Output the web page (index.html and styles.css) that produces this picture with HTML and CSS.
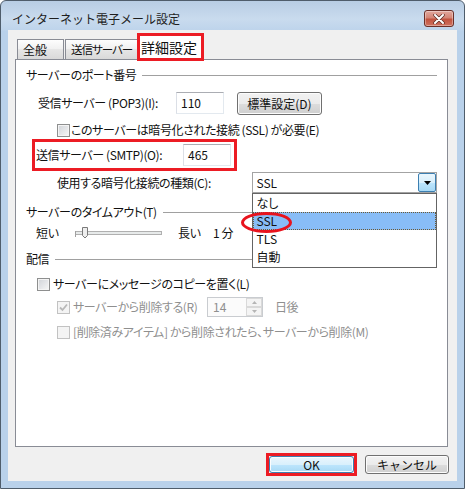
FILE: index.html
```html
<!DOCTYPE html>
<html lang="ja">
<head>
    <meta charset="UTF-8">
    <title>インターネット電子メール設定</title>
    <link rel="stylesheet" href="styles.css">
</head>
<body>
    <div class="window">
        <!-- Title bar -->
        <div class="titlebar">
            <span class="title">インターネット電子メール設定</span>
            <button class="close-btn">
                <svg width="12" height="10" viewBox="0 0 12 10">
                    <path d="M2 1 L10 9 M10 1 L2 9" stroke="#5b2c25" stroke-width="3.4" stroke-linecap="round"/>
                    <path d="M2 1 L10 9 M10 1 L2 9" stroke="#fff" stroke-width="2" stroke-linecap="round"/>
                </svg>
            </button>
        </div>

        <div class="client">
            <!-- Tabs -->
            <div class="tabs">
                <div class="tab tab-general">全般</div>
                <div class="tab tab-smtp">送信サーバー</div>
                <div class="tab tab-active">詳細設定</div>
            </div>

            <div class="panel">
                <!-- Ports -->
                <div class="group-head head-ports">
                    <span>サーバーのポート番号</span>
                    <span class="rule"></span>
                </div>
                <div class="row row-pop3">
                    <span class="pop3-label">受信サーバー (POP3)(I):</span>
                    <div class="textbox">110</div>
                    <button class="btn default-btn">標準設定(D)</button>
                </div>
                <div class="row row-ssl">
                    <span class="checkbox"></span>
                    <span>このサーバーは暗号化された接続 (SSL) が必要(E)</span>
                </div>
                <div class="row smtp-mark">
                    <span class="smtp-label">送信サーバー (SMTP)(O):</span>
                    <div class="textbox">465</div>
                </div>
                <div class="row row-crypto">
                    <span class="crypto-label">使用する暗号化接続の種類(C):</span>
                    <div class="combo">
                        <span class="combo-value">SSL</span>
                        <span class="combo-arrow">
                            <svg width="7" height="4" viewBox="0 0 7 4"><path d="M0 0 H7 L3.5 4 Z" fill="#000"/></svg>
                        </span>
                        <ul class="combo-list">
                            <li>なし</li>
                            <li class="selected">SSL</li>
                            <li>TLS</li>
                            <li>自動</li>
                        </ul>
                        <span class="circle-mark"></span>
                    </div>
                </div>

                <!-- Timeout -->
                <div class="group-head head-timeout">
                    <span>サーバーのタイムアウト(T)</span>
                    <span class="rule"></span>
                </div>
                <div class="row row-slider">
                    <span class="short">短い</span>
                    <svg class="slider" width="88" height="14" viewBox="0 0 88 14">
                        <rect x="0.5" y="5.5" width="86" height="3" fill="#e7eaea" stroke="#b0b0b0"/>
                        <line x1="0.5" y1="5" x2="0.5" y2="11" stroke="#a0a0a0"/>
                        <path d="M7.5 1.5 H12.5 V9.5 L10 12 L7.5 9.5 Z" fill="#eeeeee" stroke="#7a7a7a"/>
                    </svg>
                    <span class="long">長い</span>
                    <span>1 分</span>
                </div>

                <!-- Delivery -->
                <div class="group-head head-delivery">
                    <span>配信</span>
                    <span class="rule"></span>
                </div>
                <div class="row row-copy">
                    <span class="checkbox"></span>
                    <span>サーバーにメッセージのコピーを置く(L)</span>
                </div>
                <div class="row row-delete disabled">
                    <span class="checkbox checked">
                        <svg width="9" height="9" viewBox="0 0 9 9"><path d="M1 4.5 L3.5 7 L8 1.5" stroke="#b8b8b8" stroke-width="1.8" fill="none"/></svg>
                    </span>
                    <span class="delete-label">サーバーから削除する(R)</span>
                    <div class="spin">
                        <span class="spin-value">14</span>
                        <span class="spin-buttons">
                            <span class="spin-up"><svg width="5" height="3" viewBox="0 0 5 3"><path d="M0 3 H5 L2.5 0 Z" fill="#b5b5b5"/></svg></span>
                            <span class="spin-down"><svg width="5" height="3" viewBox="0 0 5 3"><path d="M0 0 H5 L2.5 3 Z" fill="#b5b5b5"/></svg></span>
                        </span>
                    </div>
                    <span class="days">日後</span>
                </div>
                <div class="row row-deleted disabled">
                    <span class="checkbox"></span>
                    <span>[削除済みアイテム] から削除されたら、サーバーから削除(M)</span>
                </div>
            </div>

            <!-- Dialog buttons -->
            <div class="actions">
                <div class="ok-mark">
                    <button class="btn ok-btn">OK</button>
                </div>
                <button class="btn cancel-btn">キャンセル</button>
            </div>
        </div>
    </div>
</body>
</html>
```

FILE: styles.css
```css
* {
    margin: 0;
    padding: 0;
    box-sizing: border-box;
}

body {
    width: 465px;
    height: 489px;
    overflow: hidden;
    background: #fff;
    font-family: "Noto Sans CJK JP", sans-serif;
    font-size: 12px;
    line-height: 16px;
    color: #111;
    font-feature-settings: "palt";
}

/* Window frame */
.window {
    width: 465px;
    height: 489px;
    border: 1px solid #4f5d6b;
    border-radius: 6px 6px 0 0;
    background: linear-gradient(to bottom, #b8cde4 0, #c9dbee 18px, #bed4eb 29px, #b9d1ea 30px);
    padding: 0 7px 7px;
    display: flex;
    flex-direction: column;
}

.titlebar {
    height: 29px;
    display: flex;
    align-items: flex-start;
    padding-left: 4px;
}

.title {
    margin-top: 10px;
    font-feature-settings: normal;
    color: #1e1e1e;
}

.close-btn {
    margin-left: auto;
    margin-top: 9px;
    margin-right: 3px;
    width: 30px;
    height: 17px;
    border: 1px solid #6b2f28;
    border-radius: 3px;
    background: linear-gradient(to bottom, #e2a89e 0%, #d48576 45%, #c2533f 55%, #cf7260 100%);
    box-shadow: inset 0 0 0 1px rgba(255, 255, 255, 0.35);
    display: flex;
    align-items: center;
    justify-content: center;
}

.client {
    height: 451px;
    background: #f0f0f0;
    padding: 3px 8px 0 7px;
    display: flex;
    flex-direction: column;
}

/* Tabs */
.tabs {
    height: 26px;
    display: flex;
    align-items: flex-end;
    padding-left: 2px;
    position: relative;
    z-index: 1;
}

.tab {
    height: 20px;
    padding: 0 5px;
    border: 1px solid #898c95;
    border-bottom: none;
    background: linear-gradient(to bottom, #fdfdfd 0%, #f1f1f1 45%, #e6e6e6 50%, #d9d9d9 100%);
    line-height: 19px;
    white-space: nowrap;
}

.tab-general {
    width: 47px;
}

.tab-smtp {
    width: 74px;
    margin-left: 1px;
    padding: 0 0 0 5px;
    font-size: 11.5px;
    letter-spacing: -1px;
}

.tab-active {
    width: 67px;
    height: 28px;
    margin-left: -2px;
    margin-bottom: -2px;
    border: 3px solid #ec1c24;
    background: #fff;
    font-size: 14px;
    line-height: 22px;
    padding: 0 0 0 1px;
}

.panel {
    width: 433px;
    height: 388px;
    border: 1px solid #898c95;
    background: #fff;
    padding: 7px 10px 0;
    display: flex;
    flex-direction: column;
    letter-spacing: -0.4px;
}

.group-head {
    height: 16px;
    display: flex;
    align-items: center;
}

.group-head .rule {
    flex: 1;
    height: 1px;
    background: #a0a0a0;
    margin-left: 6px;
}

.head-timeout,
.head-delivery {
    margin-top: 10px;
}

.row {
    display: flex;
    align-items: center;
    white-space: nowrap;
}

.row-pop3 {
    height: 24px;
    margin-top: 8px;
    padding-left: 12px;
}

.pop3-label {
    width: 138px;
}

.textbox {
    width: 48px;
    height: 22px;
    border: 1px solid #e3e9ef;
    border-top-color: #abadb3;
    border-left-color: #dbdfe6;
    background: #fff;
    padding-left: 4px;
    line-height: 20px;
    letter-spacing: 0;
}

.btn {
    font-family: inherit;
    font-size: 12px;
    color: #111;
    border: 1px solid #707070;
    border-radius: 3px;
    background: linear-gradient(to bottom, #f2f2f2 0%, #ebebeb 50%, #dddddd 50%, #cfcfcf 100%);
    box-shadow: inset 0 0 0 1px #fcfcfc;
}

.default-btn {
    width: 85px;
    height: 23px;
    margin-left: 13px;
    letter-spacing: 0;
}

.checkbox {
    width: 13px;
    height: 13px;
    border: 1px solid #8e8f8f;
    background: linear-gradient(135deg, #d0d3d8 0%, #f7f7f7 100%);
    box-shadow: inset 0 0 0 1px #f4f4f4;
    margin-right: 3px;
    flex-shrink: 0;
    display: flex;
    align-items: center;
    justify-content: center;
}

.row-ssl {
    height: 16px;
    margin-top: 7px;
    padding-left: 31px;
}

.row-ssl .checkbox {
    margin-right: 1px;
}

.smtp-mark {
    width: 205px;
    height: 32px;
    margin-top: 1px;
    margin-left: 6px;
    border: 3px solid #ec1c24;
    padding-left: 1px;
}

.smtp-label {
    width: 147px;
}

.row-crypto {
    height: 22px;
    margin-top: 1px;
    padding-left: 31px;
}

.crypto-label {
    width: 196px;
}

/* Combo box with open list */
.combo {
    align-self: flex-start;
    width: 185px;
    height: 21px;
    border: 1px solid #a3a3a3;
    background: #fff;
    display: flex;
    position: relative;
    letter-spacing: 0;
}

.combo-value {
    flex: 1;
    padding-left: 3px;
    line-height: 19px;
}

.combo-arrow {
    width: 18px;
    border: 1px solid #3c7fb1;
    border-radius: 2px;
    background: linear-gradient(to bottom, #eaf6fd 0%, #d9f0fc 50%, #bee6fd 50%, #a7d9f5 100%);
    display: flex;
    align-items: center;
    justify-content: center;
}

.combo-list {
    position: absolute;
    top: 20px;
    left: -1px;
    width: 185px;
    height: 75px;
    border: 1px solid #646464;
    background: #fff;
    list-style: none;
    z-index: 2;
}

.combo-list li {
    height: 18px;
    line-height: 18px;
    padding-left: 3px;
}

.combo-list .selected {
    background: #88bdf7;
    border: 1px dotted #6b5a35;
    padding-left: 2px;
    line-height: 16px;
}

.circle-mark {
    position: absolute;
    left: -12px;
    top: 39px;
    width: 51px;
    height: 21px;
    border: 3px solid #e8131d;
    border-radius: 50%;
    z-index: 3;
}

.row-slider {
    height: 16px;
    margin-top: 5px;
    padding-left: 10px;
}

.short {
    width: 39px;
}

.long {
    width: 35px;
    margin-left: 15px;
}

.row-copy {
    height: 16px;
    margin-top: 9px;
    padding-left: 11px;
}

.disabled {
    color: #8f8f8f;
}

.disabled .checkbox {
    border-color: #c2c2c2;
    background: #f4f4f4;
    box-shadow: none;
}

.row-delete {
    height: 20px;
    margin-top: 5px;
    padding-left: 31px;
}

.delete-label {
    width: 134px;
}

.spin {
    width: 56px;
    height: 20px;
    border: 1px solid #c9ccd0;
    background: #fbfbfb;
    display: flex;
    letter-spacing: 0;
}

.spin-value {
    flex: 1;
    padding-left: 5px;
    line-height: 18px;
}

.spin-buttons {
    width: 16px;
    display: flex;
    flex-direction: column;
}

.spin-up,
.spin-down {
    flex: 1;
    border: 1px solid #d9d9d9;
    background: #f4f4f4;
    display: flex;
    align-items: center;
    justify-content: center;
}

.days {
    margin-left: 12px;
}

.row-deleted {
    height: 16px;
    margin-top: 7px;
    padding-left: 31px;
}

/* Dialog buttons */
.actions {
    display: flex;
    justify-content: flex-end;
    align-items: flex-start;
    gap: 8px;
    margin-top: 6px;
}

.ok-mark {
    border: 3px solid #ec1c24;
    width: 91px;
    height: 23px;
}

.ok-btn {
    width: 85px;
    height: 17px;
    border-color: #3c7fb1;
    background: linear-gradient(to bottom, #eaf6fd 0%, #d9f0fc 50%, #bee6fd 50%, #a7d9f5 100%);
    line-height: 14px;
}

.cancel-btn {
    width: 84px;
    height: 19px;
    margin-top: 2px;
    line-height: 16px;
}
```
